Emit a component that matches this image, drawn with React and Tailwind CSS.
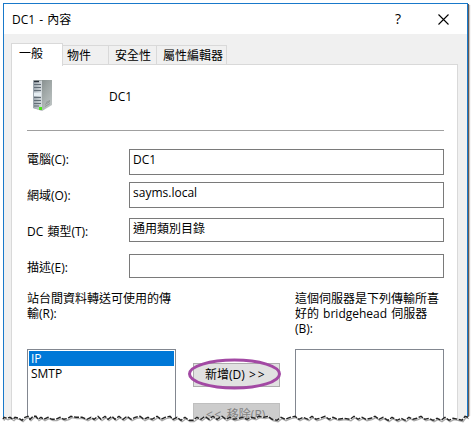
const TORN =
  '3,420 4,418 7,419 10,418 13,420 15,418 19,419 22,421 25,418 28,417 30,420 33,417 36,417 38,420 41,418 44,420 48,418 52,420 56,420 60,418 64,420 68,419 71,417 76,418 82,418 87,420 91,418 94,420 98,417 101,420 105,417 108,420 112,417 115,420 119,417 123,420 127,417 131,420 135,418 140,417 144,420 148,418 152,420 157,417 161,420 165,418 170,417 173,420 177,418 181,421 185,418 189,421 193,421 197,418 201,420 205,417 209,420 213,417 217,420 222,417 226,420 230,418 234,420 239,419 243,418 247,420 251,418 255,419 259,417 264,418 268,417 272,420 277,421 281,418 285,420 290,418 295,417 299,420 303,418 308,420 312,417 316,420 320,419 325,417 329,420 333,418 338,420 344,419 350,420 354,417 358,420 362,418 366,420 371,419 375,417 379,420 383,418 388,421 392,418 397,421 401,419 405,421 409,418 413,420 417,419 421,417 425,420 429,419 433,421 437,419 441,421 445,418 449,421 453,419 458,420 462,421 465,417 468,418';

function ServerIcon() {
  return (
    <svg width="19" height="31" viewBox="0 0 19 31">
      <defs>
        <linearGradient id="side" x1="0" y1="0" x2="1" y2="1">
          <stop offset="0" stopColor="#727b7b" />
          <stop offset=".45" stopColor="#9ba3a2" />
          <stop offset="1" stopColor="#c4caca" />
        </linearGradient>
        <linearGradient id="front" x1="0" y1="0" x2="1" y2="0">
          <stop offset="0" stopColor="#9ba5ad" />
          <stop offset="1" stopColor="#d4dadd" />
        </linearGradient>
      </defs>
      <path d="M0 .5L8 0H19V25L9 31L0 28Z" fill="url(#side)" />
      <path d="M0 1L9 .5V30.5L0 28Z" fill="url(#front)" />
      <path d="M1 1.5H6" stroke="#293139" strokeWidth="1.4" />
      <path d="M1 4.5H8M1 7.5H8M1 10.5H8M1 17.5H8M1 20.5H8M1 23.5H8M1 26H6" stroke="#626e77" strokeWidth="1" />
      <path d="M1 12.5H8V16H1Z" fill="#e5edf2" />
      <path d="M12 24.5l5-3M12 26.5l5-3M13 22.5l4-2" stroke="#7c8582" strokeWidth=".6" />
      <rect x="6" y="27" width="3" height="3" fill="#4be51a" />
    </svg>
  );
}

function Field({ label, value, rowClass, boxClass, labelClass }) {
  return (
    <div className={`flex items-start ${rowClass}`}>
      <div className={`w-[102px] shrink-0 ${labelClass}`}>{label}</div>
      <div className={`w-[315px] border border-[#7a7a7a] bg-white pl-[3px] leading-[18px] ${boxClass}`}>{value}</div>
    </div>
  );
}

export default function App() {
  return (
    <div className="relative h-[423px] w-[472px] overflow-hidden bg-white pt-[3px] pl-[3px] font-['Open_Sans','Noto_Sans_CJK_TC',sans-serif] text-[12px] leading-[15px] font-normal [word-spacing:1px] text-black">
      <div className="h-[420px] w-[465px] border border-b-0 border-[#1979ca] bg-[#f0f0f0] shadow-[1px_1px_0_#655b55,2px_2px_1px_#c9c4c0]">
        <header className="flex h-[30px] items-center bg-white pl-2">
          <span className="grow">DC1 - 內容</span>
          <span className="mr-[37px] pb-px text-[14px] font-medium">?</span>
          <svg className="mr-[18px]" width="11" height="11" viewBox="0 0 11 11" stroke="#000" strokeWidth="1.1">
            <path d="M.5.5l10 10M10.5.5l-10 10" />
          </svg>
        </header>
        <nav className="flex h-[31px] items-end pl-[7px]">
          <div className="relative z-10 -mb-px h-[23px] w-[52px] border border-b-0 border-[#d9d9d9] bg-white pt-[2px] pl-[7px]">一般</div>
          <div className="h-[20px] w-[46px] border-t border-r border-[#d9d9d9] pt-[2px] pl-[4px]">物件</div>
          <div className="h-[20px] w-[48px] border-t border-r border-[#d9d9d9] pt-[2px] pl-[6px]">安全性</div>
          <div className="h-[20px] w-[70px] border-t border-r border-[#d9d9d9] pt-[2px] pl-[6px]">屬性編輯器</div>
        </nav>
        <main className="-mt-px ml-[7px] h-[360px] w-[447px] border border-[#d9d9d9] bg-white pl-[15px]">
          <div className="flex h-[66px] w-[417px] border-b border-[#a0a0a0] pt-[15px] pl-[6px]">
            <ServerIcon />
            <span className="ml-[57px] pt-[9px]">DC1</span>
          </div>
          <Field label="電腦(C):" value="DC1" rowClass="mt-[18px] h-[33px]" labelClass="pt-[3px]" boxClass="h-[26px] pt-px" />
          <Field label="網域(O):" value="sayms.local" rowClass="h-[36px]" labelClass="pt-[6px]" boxClass="h-[26px] pt-px" />
          <Field label="DC 類型(T):" value="通用類別目錄" rowClass="h-[36px]" labelClass="pt-[6px]" boxClass="h-[24px] pt-px" />
          <Field label="描述(E):" value="" rowClass="h-[37px]" labelClass="pt-[6px]" boxClass="h-[24px]" />
          <div className="flex">
            <section className="w-[149px]">
              <div className="h-[58px]">站台間資料轉送可使用的傳<br />輸(R):</div>
              <div className="h-[75px] border border-[#828790] p-px">
                <div className="h-[15px] bg-[#0078d7] pl-[2px] text-white">IP</div>
                <div className="pl-[2px]">SMTP</div>
              </div>
            </section>
            <section className="ml-[17px] w-[87px] pt-[72px]">
              <div className="relative h-[24px] border border-[#adadad] bg-[#e1e1e1] pl-[11px] leading-[22px] whitespace-nowrap">
                新增(D) <span className="tracking-[2px]">&gt;&gt;</span>
                <svg className="absolute -top-[6px] -left-[7px]" width="98" height="34" viewBox="0 0 98 34">
                  <ellipse cx="47.5" cy="16" rx="45" ry="14" fill="none" stroke="#a349a4" strokeWidth="3" />
                </svg>
              </div>
              <div className="mt-[16px] h-[24px] border border-[#bfbfbf] bg-[#cccccc] pl-[12px] leading-[22px] whitespace-nowrap text-[#838383]"><span className="tracking-[1.5px]">&lt;&lt;</span> 移除(R)</div>
            </section>
            <section className="ml-[15px] w-[149px]">
              <div className="h-[58px] whitespace-nowrap">這個伺服器是下列傳輸所喜<br />好的 bridgehead 伺服器<br />(B):</div>
              <div className="h-[75px] border border-[#828790]" />
            </section>
          </div>
        </main>
      </div>
      <svg className="absolute top-0 left-0 z-20" width="472" height="423" viewBox="0 0 472 423">
        <polygon points={`0,423 0,417 ${TORN} 472,416 472,423`} fill="#fff" transform="translate(0 -1)" />
        <rect y="421" width="472" height="2" fill="#fff" />
        <polyline points={TORN} fill="none" stroke="#aaa" strokeWidth="1.3" transform="translate(1 .7)" />
        <polyline points={TORN} fill="none" stroke="#222" strokeWidth="1.4" strokeDasharray="5 1.5" transform="translate(0 -.7)" />
      </svg>
    </div>
  );
}
